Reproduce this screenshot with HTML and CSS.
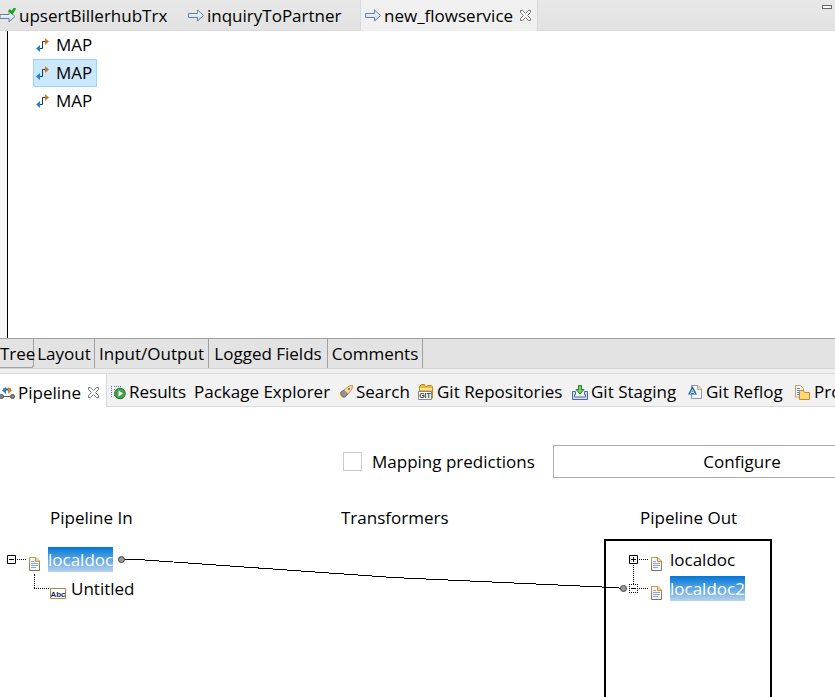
FILE: index.html
```html
<!DOCTYPE html>
<html lang="en">
<head>
<meta charset="utf-8">
<title>new_flowservice</title>
<link rel="stylesheet" href="styles.css">
</head>
<body>
<svg class="defs" aria-hidden="true">
  <defs>
    <linearGradient id="arrowFill" x1="0" y1="0" x2="0" y2="1"><stop offset="0" stop-color="#fff"/><stop offset="1" stop-color="#c3d6ea"/></linearGradient>
    <linearGradient id="pageEdge" x1="0" y1="0" x2="0" y2="1"><stop offset="0" stop-color="#c89a35"/><stop offset="1" stop-color="#77745c"/></linearGradient>
    <symbol id="arrow" viewBox="0 0 16 13"><path d="M.5 4.500h9v-3.500l6 5.500-6 5.500v-3.500h-9z" fill="url(#arrowFill)" stroke="#68819b"/></symbol>
    <symbol id="close" viewBox="0 0 11 11"><path d="M.5.5h2l3 3 3-3h2v2l-3 3 3 3v2h-2l-3-3-3 3h-2v-2l3-3-3-3z" fill="#fff" stroke="#777"/></symbol>
    <symbol id="map" viewBox="0 0 13 14"><path d="M4 10.500h2.500v-7H10" fill="none" stroke="#26344d"/><path d="M9 0l4 3.500L9 7z" fill="#c57e25"/><path d="M4 7v7l-4-3.500z" fill="#1688cc"/></symbol>
    <symbol id="page" viewBox="0 0 11 14"><path d="M.5.5h6.500l3.500 3.500v9.500H.5z" fill="#f4f7fd" stroke="url(#pageEdge)"/><path d="M6.500 1v3.500h3.500" fill="#efd28a" stroke="#c89a35"/><path d="M2 4.500h3M2 6.500h7M2 8.500h7M2 10.500h5" stroke="#8ca6d6"/></symbol>
  </defs>
</svg>
<main class="workbench">
  <nav class="editor-tabs" aria-label="Editors">
    <button class="editor-tab" type="button">
      <svg class="icon" width="16" height="15" viewBox="0 0 16 15"><path d="M0 6.500h9v-3.500l6 5.500-6 5.500v-3.500H0z" fill="url(#arrowFill)" stroke="#68819b"/><path d="M9 2l3 3 3-5" fill="none" stroke="#12a51b" stroke-width="2.500"/></svg>
      <span>upsertBillerhubTrx</span>
    </button>
    <button class="editor-tab" type="button">
      <svg class="icon" width="16" height="13"><use href="#arrow"/></svg>
      <span>inquiryToPartner</span>
    </button>
    <button class="editor-tab editor-tab-active" type="button">
      <svg class="icon" width="16" height="13"><use href="#arrow"/></svg>
      <span>new_flowservice</span>
      <svg class="icon close" width="11" height="11"><use href="#close"/></svg>
    </button>
    <button class="minimize" type="button" aria-label="Minimize"></button>
  </nav>

  <section class="editor">
    <ul class="steps">
      <li class="step"><svg class="icon" width="13" height="14"><use href="#map"/></svg>MAP</li>
      <li class="step step-selected"><svg class="icon" width="13" height="14"><use href="#map"/></svg>MAP</li>
      <li class="step"><svg class="icon" width="13" height="14"><use href="#map"/></svg>MAP</li>
    </ul>
  </section>

  <nav class="page-tabs" aria-label="Editor pages">
    <button class="page-tab page-tab-active" type="button">Tree</button>
    <button class="page-tab" type="button">Layout</button>
    <button class="page-tab" type="button">Input/Output</button>
    <button class="page-tab" type="button">Logged Fields</button>
    <button class="page-tab" type="button">Comments</button>
  </nav>

  <nav class="view-tabs" aria-label="Views">
    <button class="view-tab view-tab-active" type="button">
      <svg class="icon" width="15" height="12" viewBox="0 0 15 12"><path d="M0 9.500h15" stroke="#555"/><circle cx="1.500" cy="9.500" r="2" fill="#888" stroke="#555"/><circle cx="12.500" cy="9.500" r="2" fill="#888" stroke="#555"/><path d="M3 2.500h8" stroke="#38577d" stroke-width="2"/><path d="M6 0v7L2 3.500z" fill="#1688cc"/><path d="M8 0v7l4-3.500z" fill="#d68922"/></svg>
      <span>Pipeline</span>
      <svg class="icon close" width="11" height="11"><use href="#close"/></svg>
    </button>
    <button class="view-tab" type="button">
      <svg class="icon" width="15" height="15" viewBox="0 0 15 15"><path d="M.5 1v12M3 1.500h8M2.500 4h3M2.500 7h2M2.500 10h2" stroke="#456fae" stroke-dasharray="1 1" shape-rendering="crispEdges"/><circle cx="9" cy="8.500" r="5.300" fill="#46a047" stroke="#28782e"/><path d="M7.500 5.500v6l4.500-3z" fill="#fff"/></svg>
      <span>Results</span>
    </button>
    <button class="view-tab" type="button"><span>Package Explorer</span></button>
    <button class="view-tab" type="button">
      <svg class="icon" width="16" height="15" viewBox="0 0 16 15"><path d="M0 11l4-5 5 5-5 3.500z" fill="#fff0ae"/><path d="M4 7l3-2 4 4-3 3c-3 1-5-2-4-5z" fill="#8f929b" stroke="#6a6b75"/><path d="M7 5l5-4 3.500-.5L15 4l-4 5z" fill="#f8d9a8" stroke="#cf9148"/><circle cx="12" cy="4" r="1" fill="#5b709c"/></svg>
      <span>Search</span>
    </button>
    <button class="view-tab" type="button">
      <svg class="icon" width="16" height="16" viewBox="0 0 16 16"><path d="M1.500 9V2.500l2-2h3l1 2h1l1-1h4l1 1V14h-2" fill="#edb82e" stroke="#bd8a16"/><path d="M2 5h12" stroke="#ffe58d" stroke-width="2"/><path d="M.5 7.500h13v8H.5z" fill="#fff" stroke="#7789a4"/><text class="icon-text" x="7" y="14" text-anchor="middle">GIT</text></svg>
      <span>Git Repositories</span>
    </button>
    <button class="view-tab" type="button">
      <svg class="icon" width="16" height="15" viewBox="0 0 16 15"><path d="M3.500 6.500h-3v8h15v-8h-3v3h1v2.500h-11V9.500h1z" fill="#d5e2f4" stroke="#4a66a0"/><path d="M6.500.5h3v4h2.500l-4 4.500-4-4.500h2.500z" fill="#78ca66" stroke="#25832c"/></svg>
      <span>Git Staging</span>
    </button>
    <button class="view-tab view-tab-wide" type="button">
      <svg class="icon" width="14" height="14" viewBox="0 0 14 14"><path d="M3.500.5h6.500l3.500 3.500v9.500h-10z" fill="#f3f7fd" stroke="#8496bb"/><path d="M9.500.5v4h4" fill="#f2d896" stroke="#c6a862"/><path d="M0 9.500L4.500 1 9 9.500z" fill="#24689c"/><path d="M2.500 9l2-4.500 2 4.500M3 7.500h3" fill="none" stroke="#c8def0"/></svg>
      <span>Git Reflog</span>
    </button>
    <button class="view-tab view-tab-wide" type="button">
      <svg class="icon" width="15" height="15" viewBox="0 0 15 15"><path d="M.5.5h5l3 3V12h-8z" fill="#fff" stroke="#c6a25a"/><path d="M2 3.500h3M2 5.500h3M2 7.500h2M2 9.500h2" stroke="#587fb9"/><path d="M4.500 14.500v-8l1-1h3l1 2h5v7z" fill="#ffd978" stroke="#c88a2d"/></svg>
      <span>Properties</span>
    </button>
  </nav>

  <section class="pipeline">
    <div class="options">
      <label class="prediction"><input class="checkbox" type="checkbox"><span>Mapping predictions</span></label>
      <button class="configure" type="button">Configure</button>
    </div>
    <div class="mapping">
      <section class="column">
        <h2 class="heading heading-in">Pipeline In</h2>
        <ul class="tree">
          <li class="node">
            <svg class="branch" width="40" height="29" viewBox="0 0 40 29"><path d="M7.500 9.500h8v8h-8zM9 13.500h5" fill="none" stroke="#000"/><path class="dots" d="M17 13.500h9M34.500 28v1"/><use href="#page" x="29" y="11" width="11" height="14"/></svg>
            <span class="field field-selected">localdoc</span>
          </li>
          <li class="node node-child">
            <svg class="branch" width="66" height="29" viewBox="0 0 66 29"><path class="dots" d="M34.500 0v13M34 13.500h15"/><path d="M50.500 13.500h15v10h-15z" fill="#fff" stroke="#a78b4c"/><text class="icon-text icon-text-blue" x="58" y="22" text-anchor="middle">Abc</text></svg>
            <span class="field">Untitled</span>
          </li>
        </ul>
      </section>
      <section class="column">
        <h2 class="heading">Transformers</h2>
      </section>
      <section class="column">
        <h2 class="heading heading-out">Pipeline Out</h2>
        <ul class="tree tree-boxed">
          <li class="node">
            <svg class="branch" width="56" height="29" viewBox="0 0 56 29"><path d="M23.500 9.500h8v8h-8zM25 13.500h5M27.500 11v5" fill="none" stroke="#000"/><path class="dots" d="M33 13.500h9M27.500 19v10"/><use href="#page" x="45" y="11" width="11" height="14"/></svg>
            <span class="field">localdoc</span>
          </li>
          <li class="node">
            <svg class="branch" width="56" height="29" viewBox="0 0 56 29"><path class="dots" d="M23 9.500h9M23 17.500h9M23.500 9v9M31.500 9v9M33 13.500h9M27.500 0v9"/><path d="M25 13.500h5" stroke="#000"/><use href="#page" x="45" y="11" width="11" height="14"/></svg>
            <span class="field field-selected">localdoc2</span>
          </li>
        </ul>
      </section>
      <svg class="link" width="510" height="40" viewBox="0 0 510 40"><path d="M4 5.500h16L275 23.500 495 33.500l11 1" fill="none" stroke="#000" shape-rendering="crispEdges"/><circle cx="3.500" cy="5.500" r="3" fill="#999" stroke="#444"/><circle cx="505.500" cy="34.500" r="3" fill="#999" stroke="#444"/></svg>
    </div>
  </section>
</main>
</body>
</html>
```
FILE: styles.css
```css
* { box-sizing: border-box; }

body {
  margin: 0;
  height: 100vh;
  overflow: hidden;
  background: #fff;
  color: #000;
  font: 17px/24px "Open Sans", "Segoe UI", sans-serif;
}

button {
  padding: 0;
  border: 0;
  border-radius: 0;
  background: none;
  color: inherit;
  font: inherit;
  white-space: nowrap;
}

ul { margin: 0; padding: 0; list-style: none; }
.defs { position: absolute; width: 0; height: 0; }
.icon { flex: none; }
.icon-text { font: bold 7px "Liberation Sans", sans-serif; fill: #333; }
.icon-text-blue { font-size: 8px; fill: #142966; }

.workbench {
  display: flex;
  flex-direction: column;
  height: 100%;
  overflow: hidden;
}

.editor-tabs {
  display: grid;
  grid-template-columns: 184px 176px 178px 1fr;
  flex: none;
  height: 31px;
  border-bottom: 1px solid #d9d9d9;
  background: linear-gradient(#e8e8e8, #e2e2e2);
}

.editor-tab {
  display: flex;
  align-items: center;
  gap: 3px;
  padding-left: 4px;
}

.editor-tab span { padding-top: 1px; }
.editor-tab:first-child { padding-left: 0; }

.editor-tab-active {
  height: 31px;
  border: solid #d9d9d9;
  border-width: 0 1px;
  background: #f0f0f0;
}

.close { margin-left: 4px; }

.minimize {
  justify-self: end;
  width: 10px;
  height: 4px;
  margin: 5px 3px;
  border: 1px solid #666;
  background: #fff;
}

.editor {
  flex: none;
  height: 307px;
  padding-left: 7px;
  background: linear-gradient(90deg, #f7f7f7 7px, #fff 7px);
}

.steps {
  height: 100%;
  padding-left: 25px;
  border-left: 1px solid #000;
}

.step {
  display: flex;
  align-items: center;
  gap: 7px;
  width: max-content;
  height: 28px;
  padding: 0 4px 0 2px;
  border: 1px solid transparent;
}

.step-selected { border-color: #99d1ff; background: #cce8ff; }

.page-tabs {
  display: grid;
  grid-template-columns: 34px 61px 114px 119px 95px;
  flex: none;
  height: 31px;
  border-top: 1px solid #a0a0a0;
  border-bottom: 1px solid #d5d5d5;
  background: #e3e3e3;
}

.page-tab { border-right: 1px solid #a0a0a0; }

.page-tab-active {
  height: 29px;
  padding-top: 1px;
  border-bottom: 1px solid #a0a0a0;
  border-bottom-right-radius: 3px;
  text-align: left;
}

.view-tabs {
  display: grid;
  grid-template-columns: 107px 87px 143px 81px 154px 116px 107px 110px;
  flex: none;
  height: 38px;
  padding-top: 4px;
  border-bottom: 1px solid #d9d9d9;
  background: linear-gradient(#f0f0f0 4px, #d9d9d9 4px, #d9d9d9 5px, #f2f2f2 5px);
}

.view-tab {
  display: flex;
  align-items: center;
  gap: 3px;
  height: 33px;
  padding-top: 5px;
}

.view-tab:nth-child(2) { padding-left: 4px; }
.view-tab-wide { gap: 4px; }

.view-tab-active {
  height: 34px;
  padding-top: 4px;
  border-top: 1px solid #d9d9d9;
  border-right: 1px solid #d9d9d9;
  background: #fff;
}

.pipeline {
  display: flex;
  flex: 1;
  flex-direction: column;
  min-height: 0;
}

.options {
  display: flex;
  align-items: flex-start;
  gap: 16px;
  flex: none;
  height: 34px;
  margin: 38px 0 0 343px;
}

.prediction {
  display: flex;
  align-items: center;
  flex: none;
  gap: 10px;
  width: 194px;
  height: 32px;
  white-space: nowrap;
}

.prediction span { padding-top: 2px; }

.checkbox {
  appearance: none;
  flex: none;
  width: 19px;
  height: 19px;
  margin: 0;
  border: 1px solid #ccc;
  background: #fff;
}

.configure {
  flex: none;
  width: 378px;
  height: 33px;
  border: 1px solid #adadad;
  background: #fff;
}

.mapping {
  position: relative;
  display: grid;
  grid-template-columns: 341px 263px 168px;
  flex: 1;
  margin-top: 27px;
}

.column { display: flex; flex-direction: column; }

.heading {
  margin: 0;
  height: 33px;
  font: inherit;
}

.heading-in { padding-left: 50px; }
.heading-out { padding-left: 36px; }

.tree { padding-top: 7px; }

.tree-boxed {
  flex: 1;
  padding-top: 5px;
  border: solid #000;
  border-width: 2px 2px 0;
}

.node {
  display: flex;
  align-items: flex-start;
  gap: 8px;
  height: 29px;
}

.node-child { gap: 5px; }
.branch { flex: none; }

.dots {
  fill: none;
  stroke: #000;
  stroke-dasharray: 1 1;
  shape-rendering: crispEdges;
}

.field {
  height: 25px;
  margin-top: 1px;
  line-height: 26px;
}

.field-selected {
  background: linear-gradient(#0078d7, #b8d2ee);
  color: #fff;
}

.link {
  position: absolute;
  left: 118px;
  top: 48px;
}
```
